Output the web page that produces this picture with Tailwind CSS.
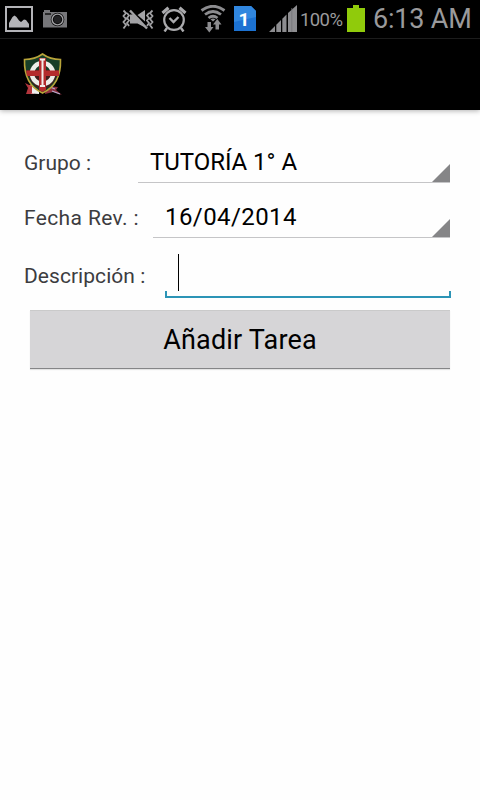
<!DOCTYPE html>
<html lang="es">
<head>
    <meta charset="UTF-8">
    <meta name="viewport" content="width=device-width, initial-scale=1.0">
    <title>Añadir Tarea</title>
    <script src="https://cdn.jsdelivr.net/npm/@tailwindcss/browser@4"></script>
</head>
<body class="bg-[#fefefe] text-black font-[Roboto,sans-serif] h-screen overflow-hidden flex flex-col">

    <!-- Barra de estado -->
    <header class="h-[38px] shrink-0 bg-black flex items-start text-[#9a9a9c] whitespace-nowrap">
        <!-- Imagen -->
        <svg class="w-7 h-[26px] mt-1.5 ml-[5px] shrink-0" viewBox="0 0 28 26">
            <rect x="1" y="1" width="26" height="24" fill="none" stroke="#b4b4b8" stroke-width="2"/>
            <path d="M4 21.500V17L7.500 11L9.500 9.500L11.500 11L14 14.500L16 16L19 13.500L21 14L24 18V21.500Z" fill="#b4b4b8"/>
        </svg>
        <!-- Cámara -->
        <svg class="w-[26px] h-[19px] mt-[9px] ml-[9px] shrink-0" viewBox="0 0 26 19">
            <path d="M1 3H2V1H8V3H25V18.500H1Z" fill="#77777a"/>
            <path d="M3 5H9" stroke="#111" stroke-width="1.500"/>
            <circle cx="15.500" cy="10.500" r="6.800" fill="#0c0c0c"/>
            <circle cx="15.500" cy="10.500" r="5.400" fill="none" stroke="#a0a0a3" stroke-width="1.400"/>
            <circle cx="15.500" cy="10.500" r="3.700" fill="#222224"/>
        </svg>
        <!-- Vibración / silencio -->
        <svg class="w-8 h-[22px] mt-[9px] ml-[54px] shrink-0" viewBox="0 0 32 22" fill="none" stroke="#a2a2a5" stroke-width="1.800">
            <path d="M1.500 1.500L4 4L1.500 7L4 10L1.500 13L4 16L1.500 19.500M5 4L7 6.500L5 9L7 11.500L5 14L7 17"/>
            <path d="M30.500 1.500L28 4L30.500 7L28 10L30.500 13L28 16L30.500 19.500M27 4L25 6.500L27 9L25 11.500L27 14L25 17"/>
            <path d="M8 5.500H11L24 17.500V19L15.500 14.500H8ZM15.500 6L23 1V12.500Z" fill="#a2a2a5" stroke="none"/>
            <path d="M8 1.500L25 19.500" stroke-width="2.400"/>
        </svg>
        <!-- Alarma -->
        <svg class="w-[26px] h-[26px] mt-1.5 ml-[7px] shrink-0" viewBox="0 0 26 26" fill="none" stroke="#aaaaad" stroke-width="2.200">
            <circle cx="13" cy="14" r="9.800"/>
            <path d="M1.500 7L7.500 1.800M24.500 7L18.500 1.800" stroke-width="3.200"/>
            <path d="M8.500 12L12.500 16L17.500 11M6 22L3.500 25.500M20 22L22.500 25.500" stroke-width="2.400"/>
        </svg>
        <!-- Wifi -->
        <svg class="w-[26px] h-7 mt-[5px] ml-[13px] shrink-0" viewBox="0 0 26 28" fill="none" stroke="#8c8c8f" stroke-width="2.800">
            <path d="M1.500 5.500Q13 -3 24.500 5.500M5 9.500Q13 3.500 21 9.500M8.500 13Q13 9.500 17.500 13"/>
            <path d="M10.500 14.300Q13 12.500 15.500 14.300L13 16.500Z" fill="#8c8c8f" stroke="none"/>
            <path d="M7.500 17H11V22H13.500L9.300 27.500L5 22H7.500ZM15.500 24.500V19.500H13L17.300 14L21.500 19.500H19V24.500Z" fill="#8c8c8f" stroke="none"/>
        </svg>
        <!-- SIM 1 -->
        <svg class="w-[22px] h-[25px] mt-1.5 ml-2 shrink-0" viewBox="0 0 22 25">
            <path d="M0 0H17L22 5V25H0Z" fill="#1c72d2"/>
            <path d="M0 0H17L22 5V11L0 16Z" fill="#3187df"/>
            <text x="10" y="19.500" text-anchor="middle" font-family="Roboto" font-weight="700" font-size="19" fill="#fff">1</text>
        </svg>
        <!-- Señal -->
        <svg class="w-7 h-7 mt-[5px] ml-[13px] shrink-0" viewBox="0 0 28 28" fill="#8d8d90">
            <path d="M0 27L6 21V27ZM7.300 19.700L12 15V27H7.300ZM13.300 13.700L17.500 9.500V27H13.300ZM19 8L28 0V27H19Z"/>
            <path d="M22.800 3V27" stroke="#747477" stroke-width=".8"/>
        </svg>
        <span class="w-[43px] ml-[3px] mt-2.5 text-[18.500px] leading-5 tracking-[-0.6px]">100%</span>
        <!-- Batería -->
        <svg class="w-[18px] h-[27px] mt-[5px] ml-1 shrink-0" viewBox="0 0 18 27">
            <path d="M0 3H6V0H12V3H18V27H0Z" fill="#90cb0b"/>
        </svg>
        <span class="ml-2 mt-1 text-[27px] leading-[30px] tracking-[-0.2px]">6:13 AM</span>
    </header>

    <!-- Barra de acción -->
    <div class="h-[72px] shrink-0 bg-black border-t border-[#1c1c1c] pl-[22px] pt-3.5 shadow-[0_1px_5px_rgba(0,0,0,0.3)]">
        <svg class="w-[42px] h-11" viewBox="0 0 42 44">
            <path d="M3 30L7 32H12V41H4L6 35Z" fill="#b3353c"/>
            <path d="M7 33L17 32V41L9 40.500Z" fill="#eee"/>
            <path d="M7 33H10V40.500H8Z" fill="#b3353c"/>
            <path d="M24 33L36 34L34 37L40 42L31 39L23 41Z" fill="#8c3040"/>
            <path d="M28 34L33 36M30 38L38 41" stroke="#b6acd0" stroke-width="1.200"/>
            <path d="M20.500 1C15 5 9 6.500 2.500 6.500C2 23 7 34 20.500 40C34 34 39 23 38.500 6.500C32 6.500 26 5 20.500 1Z" fill="#173f28" stroke="#b8a43a" stroke-width="1.600"/>
            <path d="M5 17H36Q35 30 20.500 38Q7 31 5 17Z" fill="#421e1d"/>
            <circle cx="20.500" cy="20.500" r="10.500" fill="none" stroke="#eceee8" stroke-width="4.500"/>
            <path d="M17 5H24V37L20.500 39L17 37ZM4 17.500H37V23H5Z" fill="#b42c2d"/>
            <path d="M18 6.500H23M18 33H23M20.500 6.500V33" stroke="#f1eeea" stroke-width="2"/>
        </svg>
    </div>

    <!-- Formulario -->
    <main class="pl-6 pr-[29px] pt-[31px] text-[#3c3c3f] text-[21px]">
        <div class="flex h-[42px]">
            <label class="w-[114px] shrink-0 pt-2 leading-7 whitespace-nowrap">Grupo :</label>
            <div class="relative flex-1 mr-px border-b border-[#c5c5c7] pl-3 pt-1.5 text-black text-[24px] leading-[30px] tracking-[-0.05px] whitespace-nowrap">
                TUTORÍA 1° A
                <svg class="absolute right-0 bottom-0 w-[18px] h-[18px]" viewBox="0 0 18 18"><path d="M18 0V18H0Z" fill="#858587"/></svg>
            </div>
        </div>
        <div class="flex h-[42px] mt-[13px]">
            <label class="w-[129px] shrink-0 pt-2 leading-7 tracking-[0.36px] whitespace-nowrap">Fecha Rev. :</label>
            <div class="relative flex-1 mr-px border-b border-[#c5c5c7] pl-3 pt-1.5 text-black text-[24px] leading-[30px] tracking-[0.42px] whitespace-nowrap">
                16/04/2014
                <svg class="absolute right-0 bottom-0 w-[18px] h-[18px]" viewBox="0 0 18 18"><path d="M18 0V18H0Z" fill="#858587"/></svg>
            </div>
        </div>
        <div class="flex h-[60px]">
            <label class="w-[141px] shrink-0 pt-6 leading-7 tracking-[0.05px] whitespace-nowrap">Descripción :</label>
            <div class="flex-1 flex flex-col justify-end">
                <div class="w-px h-[37px] ml-[13px] bg-black"></div>
                <div class="h-[7px] border-2 border-t-0 border-[#2c94b6]"></div>
            </div>
        </div>
        <button class="block w-[420px] h-[59px] ml-1.5 mt-3 pt-0.5 bg-[#d6d5d7] border-b border-b-[#858587] border-t border-t-[#cacaca] shadow-[0_1px_1px_rgba(0,0,0,0.1)] text-black text-[27px] tracking-[0.18px]">Añadir Tarea</button>
    </main>

</body>
</html>
